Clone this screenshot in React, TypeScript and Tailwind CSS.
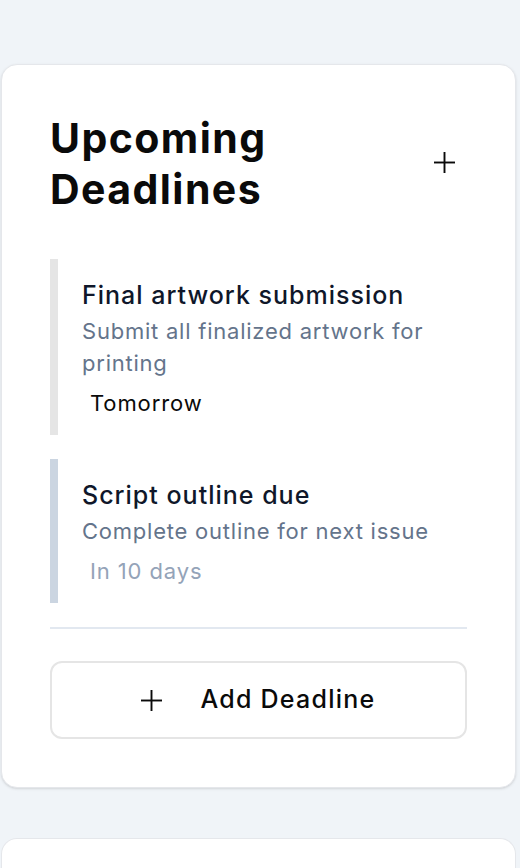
import React from 'react';

type Deadline = {
  title: string;
  description: string;
  due: string;
  barClass: string;
  dueClass: string;
};

const deadlines: Deadline[] = [
  {
    title: 'Final artwork submission',
    description: 'Submit all finalized artwork for printing',
    due: 'Tomorrow',
    barClass: 'border-[#e5e5e5]',
    dueClass: 'text-[#0a0a0a]',
  },
  {
    title: 'Script outline due',
    description: 'Complete outline for next issue',
    due: 'In 10 days',
    barClass: 'border-[#cbd5e1]',
    dueClass: 'text-[#94a3b8]',
  },
];

const PlusIcon: React.FC<{ className?: string }> = ({ className }) => (
  <svg viewBox="0 0 22 22" className={className} fill="none" stroke="currentColor" strokeWidth={2}>
    <path d="M0 11h22" />
    <path d="M11 0v22" />
  </svg>
);

const App: React.FC = () => {
  return (
    <div className="min-h-[868px] bg-[#f0f4f8] pt-16 font-['Inter',sans-serif]">
      <div className="ml-px w-[515px] rounded-2xl border border-[#e5e7eb] bg-white p-12 shadow-sm">
        {/* Header */}
        <div className="flex items-center justify-between">
          <h2 className="w-[300px] text-[41px] font-bold leading-[51px] tracking-[0.035em] text-[#0a0a0a]">
            Upcoming Deadlines
          </h2>
          <button className="-mt-1 p-3 text-[#0a0a0a]" aria-label="Add">
            <PlusIcon className="h-[21px] w-[21px]" />
          </button>
        </div>

        {/* List */}
        <div className="mt-[44px] flex flex-col gap-6">
          {deadlines.map((d) => (
            <div key={d.title} className={`border-l-8 pl-6 pt-5 pb-4 ${d.barClass}`}>
              <h3 className="text-[25px] font-medium leading-8 tracking-[0.04em] text-[#0f172a]">{d.title}</h3>
              <p className="mt-1 text-[22px] leading-8 tracking-[0.035em] text-[#64748b]">{d.description}</p>
              <span className={`mt-2 inline-block px-2 text-[22px] leading-8 tracking-[0.04em] ${d.dueClass}`}>
                {d.due}
              </span>
            </div>
          ))}
        </div>

        <div className="mt-6 border-t-2 border-[#e2e8f0]" />

        <button className="mt-8 flex h-[78px] w-full items-center justify-center gap-[38px] rounded-xl border-2 border-[#e5e5e5] text-[25px] font-medium tracking-[0.05em] text-[#0a0a0a]">
          <PlusIcon className="h-[21px] w-[21px]" />
          Add Deadline
        </button>
      </div>

      <div className="mt-[50px] ml-px h-[40px] w-[515px] rounded-t-2xl border border-b-0 border-[#e5e7eb] bg-white" />
    </div>
  );
};

export default App;
